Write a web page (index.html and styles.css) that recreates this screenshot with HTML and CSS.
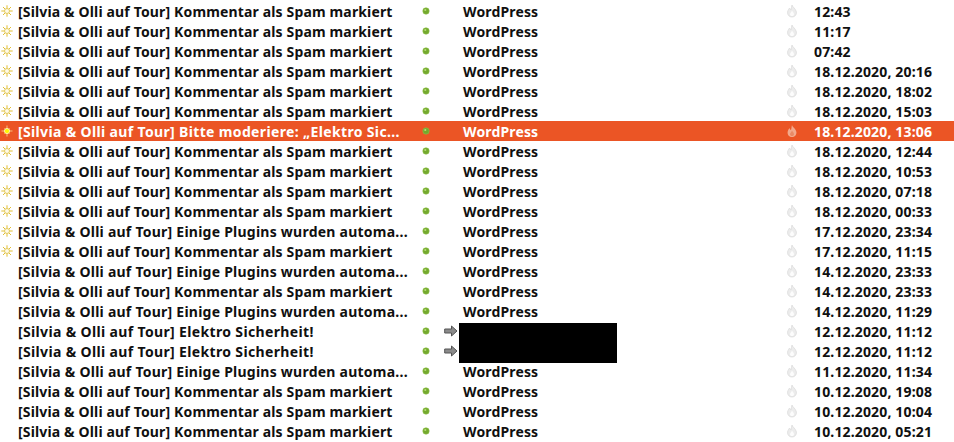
FILE: index.html
```html
<!DOCTYPE html>
<html lang="de">
<head>
<meta charset="utf-8">
<title>Mail</title>
<link rel="stylesheet" href="styles.css">
</head>
<body>
<svg class="defs" width="0" height="0" aria-hidden="true">
  <symbol id="star" viewBox="0 0 12 12">
    <path d="M6 0.3V3.4M6 8.6V11.7M0.3 6H3.4M8.6 6H11.7M2 2L4 4M10 2L8 4M2 10L4 8M10 10L8 8" stroke="#deb81e" stroke-width=".9" fill="none"/>
    <circle cx="6" cy="6" r="2.5" fill="#fffbe6" stroke="#dcbc3a" stroke-width=".8"/>
  </symbol>
  <symbol id="star-on" viewBox="0 0 12 12">
    <path d="M6 0.5V11.5M0.5 6H11.5" stroke="#f8c888" stroke-width=".9" fill="none"/>
    <path d="M3 3L9 9M9 3L3 9" stroke="#f4a068" stroke-width=".8" fill="none"/>
    <circle cx="6" cy="6" r="2.6" fill="#fff700" stroke="#fff8c4" stroke-width=".8"/>
  </symbol>
  <symbol id="dot" viewBox="0 0 8 8">
    <circle cx="4" cy="4" r="3.2" fill="#73a92c" stroke="#8dc04a" stroke-width=".6"/>
    <circle cx="3.3" cy="3" r="1.1" fill="#b5dc78"/>
  </symbol>
  <symbol id="flame" viewBox="0 0 12 14">
    <path d="M6 1C6.4 3 9.8 4.6 10.4 8C10.7 11 8.6 13 6 13C3.4 13 1.3 11 1.6 8C1.9 6 3 4.8 3.6 4C3.8 5 4.2 5.8 5 6C5.6 4.4 5.4 2.6 6 1Z" fill="#ececec" stroke="#dcdcdc" stroke-width=".8"/>
    <path d="M6 6.5C6.6 8 8 8.6 8 10.2C8 11.4 7 12 6 12C5 12 4 11.4 4 10.2C4 9 5.6 8 6 6.5Z" fill="#fcfcfc"/>
  </symbol>
  <symbol id="flame-on" viewBox="0 0 12 14">
    <path d="M6 1C6.4 3 9.8 4.6 10.4 8C10.7 11 8.6 13 6 13C3.4 13 1.3 11 1.6 8C1.9 6 3 4.8 3.6 4C3.8 5 4.2 5.8 5 6C5.6 4.4 5.4 2.6 6 1Z" fill="#f2a98c"/>
    <path d="M6 6.5C6.6 8 8 8.6 8 10.2C8 11.4 7 12 6 12C5 12 4 11.4 4 10.2C4 9 5.6 8 6 6.5Z" fill="#e88a66"/>
  </symbol>
  <symbol id="arrow" viewBox="0 0 14 12">
    <path d="M0.7 4H7.5V1L13 6L7.5 11V8H0.7Z" fill="#8a8a8a" stroke="#555" stroke-width="1"/>
  </symbol>
</svg>
<main class="list">
  <div class="row"><span class="c-star"><svg class="i-star"><use href="#star"/></svg></span><span class="subject">[Silvia &amp; Olli auf Tour] Kommentar als Spam markiert</span><span class="c-dot"><svg class="i-dot"><use href="#dot"/></svg></span><span class="c-arrow"></span><span class="sender">WordPress</span><span class="c-flame"><svg class="i-flame"><use href="#flame"/></svg></span><span class="date">12:43</span></div>
  <div class="row"><span class="c-star"><svg class="i-star"><use href="#star"/></svg></span><span class="subject">[Silvia &amp; Olli auf Tour] Kommentar als Spam markiert</span><span class="c-dot"><svg class="i-dot"><use href="#dot"/></svg></span><span class="c-arrow"></span><span class="sender">WordPress</span><span class="c-flame"><svg class="i-flame"><use href="#flame"/></svg></span><span class="date">11:17</span></div>
  <div class="row"><span class="c-star"><svg class="i-star"><use href="#star"/></svg></span><span class="subject">[Silvia &amp; Olli auf Tour] Kommentar als Spam markiert</span><span class="c-dot"><svg class="i-dot"><use href="#dot"/></svg></span><span class="c-arrow"></span><span class="sender">WordPress</span><span class="c-flame"><svg class="i-flame"><use href="#flame"/></svg></span><span class="date">07:42</span></div>
  <div class="row"><span class="c-star"><svg class="i-star"><use href="#star"/></svg></span><span class="subject">[Silvia &amp; Olli auf Tour] Kommentar als Spam markiert</span><span class="c-dot"><svg class="i-dot"><use href="#dot"/></svg></span><span class="c-arrow"></span><span class="sender">WordPress</span><span class="c-flame"><svg class="i-flame"><use href="#flame"/></svg></span><span class="date">18.12.2020, 20:16</span></div>
  <div class="row"><span class="c-star"><svg class="i-star"><use href="#star"/></svg></span><span class="subject">[Silvia &amp; Olli auf Tour] Kommentar als Spam markiert</span><span class="c-dot"><svg class="i-dot"><use href="#dot"/></svg></span><span class="c-arrow"></span><span class="sender">WordPress</span><span class="c-flame"><svg class="i-flame"><use href="#flame"/></svg></span><span class="date">18.12.2020, 18:02</span></div>
  <div class="row"><span class="c-star"><svg class="i-star"><use href="#star"/></svg></span><span class="subject">[Silvia &amp; Olli auf Tour] Kommentar als Spam markiert</span><span class="c-dot"><svg class="i-dot"><use href="#dot"/></svg></span><span class="c-arrow"></span><span class="sender">WordPress</span><span class="c-flame"><svg class="i-flame"><use href="#flame"/></svg></span><span class="date">18.12.2020, 15:03</span></div>
  <div class="row selected"><span class="c-star"><svg class="i-star"><use href="#star-on"/></svg></span><span class="subject wide">[Silvia &amp; Olli auf Tour] Bitte moderiere: „Elektro Sic...</span><span class="c-dot"><svg class="i-dot"><use href="#dot"/></svg></span><span class="c-arrow"></span><span class="sender">WordPress</span><span class="c-flame"><svg class="i-flame"><use href="#flame-on"/></svg></span><span class="date">18.12.2020, 13:06</span></div>
  <div class="row"><span class="c-star"><svg class="i-star"><use href="#star"/></svg></span><span class="subject">[Silvia &amp; Olli auf Tour] Kommentar als Spam markiert</span><span class="c-dot"><svg class="i-dot"><use href="#dot"/></svg></span><span class="c-arrow"></span><span class="sender">WordPress</span><span class="c-flame"><svg class="i-flame"><use href="#flame"/></svg></span><span class="date">18.12.2020, 12:44</span></div>
  <div class="row"><span class="c-star"><svg class="i-star"><use href="#star"/></svg></span><span class="subject">[Silvia &amp; Olli auf Tour] Kommentar als Spam markiert</span><span class="c-dot"><svg class="i-dot"><use href="#dot"/></svg></span><span class="c-arrow"></span><span class="sender">WordPress</span><span class="c-flame"><svg class="i-flame"><use href="#flame"/></svg></span><span class="date">18.12.2020, 10:53</span></div>
  <div class="row"><span class="c-star"><svg class="i-star"><use href="#star"/></svg></span><span class="subject">[Silvia &amp; Olli auf Tour] Kommentar als Spam markiert</span><span class="c-dot"><svg class="i-dot"><use href="#dot"/></svg></span><span class="c-arrow"></span><span class="sender">WordPress</span><span class="c-flame"><svg class="i-flame"><use href="#flame"/></svg></span><span class="date">18.12.2020, 07:18</span></div>
  <div class="row"><span class="c-star"><svg class="i-star"><use href="#star"/></svg></span><span class="subject">[Silvia &amp; Olli auf Tour] Kommentar als Spam markiert</span><span class="c-dot"><svg class="i-dot"><use href="#dot"/></svg></span><span class="c-arrow"></span><span class="sender">WordPress</span><span class="c-flame"><svg class="i-flame"><use href="#flame"/></svg></span><span class="date">18.12.2020, 00:33</span></div>
  <div class="row"><span class="c-star"><svg class="i-star"><use href="#star"/></svg></span><span class="subject snug">[Silvia &amp; Olli auf Tour] Einige Plugins wurden automa...</span><span class="c-dot"><svg class="i-dot"><use href="#dot"/></svg></span><span class="c-arrow"></span><span class="sender">WordPress</span><span class="c-flame"><svg class="i-flame"><use href="#flame"/></svg></span><span class="date">17.12.2020, 23:34</span></div>
  <div class="row"><span class="c-star"><svg class="i-star"><use href="#star"/></svg></span><span class="subject">[Silvia &amp; Olli auf Tour] Kommentar als Spam markiert</span><span class="c-dot"><svg class="i-dot"><use href="#dot"/></svg></span><span class="c-arrow"></span><span class="sender">WordPress</span><span class="c-flame"><svg class="i-flame"><use href="#flame"/></svg></span><span class="date">17.12.2020, 11:15</span></div>
  <div class="row"><span class="c-star"></span><span class="subject snug">[Silvia &amp; Olli auf Tour] Einige Plugins wurden automa...</span><span class="c-dot"><svg class="i-dot"><use href="#dot"/></svg></span><span class="c-arrow"></span><span class="sender">WordPress</span><span class="c-flame"><svg class="i-flame"><use href="#flame"/></svg></span><span class="date">14.12.2020, 23:33</span></div>
  <div class="row"><span class="c-star"></span><span class="subject">[Silvia &amp; Olli auf Tour] Kommentar als Spam markiert</span><span class="c-dot"><svg class="i-dot"><use href="#dot"/></svg></span><span class="c-arrow"></span><span class="sender">WordPress</span><span class="c-flame"><svg class="i-flame"><use href="#flame"/></svg></span><span class="date">14.12.2020, 23:33</span></div>
  <div class="row"><span class="c-star"></span><span class="subject snug">[Silvia &amp; Olli auf Tour] Einige Plugins wurden automa...</span><span class="c-dot"><svg class="i-dot"><use href="#dot"/></svg></span><span class="c-arrow"></span><span class="sender">WordPress</span><span class="c-flame"><svg class="i-flame"><use href="#flame"/></svg></span><span class="date">14.12.2020, 11:29</span></div>
  <div class="row"><span class="c-star"></span><span class="subject wide">[Silvia &amp; Olli auf Tour] Elektro Sicherheit!</span><span class="c-dot"><svg class="i-dot"><use href="#dot"/></svg></span><span class="c-arrow"><svg class="i-arrow"><use href="#arrow"/></svg></span><span class="sender"></span><span class="c-flame"><svg class="i-flame"><use href="#flame"/></svg></span><span class="date">12.12.2020, 11:12</span></div>
  <div class="row"><span class="c-star"></span><span class="subject wide">[Silvia &amp; Olli auf Tour] Elektro Sicherheit!</span><span class="c-dot"><svg class="i-dot"><use href="#dot"/></svg></span><span class="c-arrow"><svg class="i-arrow"><use href="#arrow"/></svg></span><span class="sender"></span><span class="c-flame"><svg class="i-flame"><use href="#flame"/></svg></span><span class="date">12.12.2020, 11:12</span></div>
  <div class="row"><span class="c-star"></span><span class="subject snug">[Silvia &amp; Olli auf Tour] Einige Plugins wurden automa...</span><span class="c-dot"><svg class="i-dot"><use href="#dot"/></svg></span><span class="c-arrow"></span><span class="sender">WordPress</span><span class="c-flame"><svg class="i-flame"><use href="#flame"/></svg></span><span class="date">11.12.2020, 11:34</span></div>
  <div class="row"><span class="c-star"></span><span class="subject">[Silvia &amp; Olli auf Tour] Kommentar als Spam markiert</span><span class="c-dot"><svg class="i-dot"><use href="#dot"/></svg></span><span class="c-arrow"></span><span class="sender">WordPress</span><span class="c-flame"><svg class="i-flame"><use href="#flame"/></svg></span><span class="date">10.12.2020, 19:08</span></div>
  <div class="row"><span class="c-star"></span><span class="subject">[Silvia &amp; Olli auf Tour] Kommentar als Spam markiert</span><span class="c-dot"><svg class="i-dot"><use href="#dot"/></svg></span><span class="c-arrow"></span><span class="sender">WordPress</span><span class="c-flame"><svg class="i-flame"><use href="#flame"/></svg></span><span class="date">10.12.2020, 10:04</span></div>
  <div class="row"><span class="c-star"></span><span class="subject">[Silvia &amp; Olli auf Tour] Kommentar als Spam markiert</span><span class="c-dot"><svg class="i-dot"><use href="#dot"/></svg></span><span class="c-arrow"></span><span class="sender">WordPress</span><span class="c-flame"><svg class="i-flame"><use href="#flame"/></svg></span><span class="date">10.12.2020, 05:21</span></div>
  <div class="redaction"></div>
</main>
</body>
</html>
```
FILE: styles.css
```css
html, body {
  margin: 0;
  padding: 0;
  height: 442px;
  overflow: hidden;
  background: #fff;
}
.defs {
  position: absolute;
}
.list {
  position: relative;
  padding-top: 1px;
  font-family: "Noto Sans", sans-serif;
  font-weight: 700;
  font-size: 14px;
  letter-spacing: 0.15px;
  color: #101010;
}
.row {
  display: grid;
  grid-template-columns: 18px 404px 22px 17px 324px 29px 1fr;
  align-items: center;
  height: 20px;
  line-height: 20px;
  white-space: nowrap;
}
.row span {
  display: flex;
  align-items: center;
  height: 20px;
  overflow: hidden;
}
.row .subject,
.row .sender,
.row .date {
  box-sizing: border-box;
  padding-top: 2px;
}
.subject.wide {
  letter-spacing: 0.35px;
}
.subject.snug {
  letter-spacing: 0.24px;
}
.selected {
  background: #eb5525;
  color: #fff;
}
.i-star {
  width: 12px;
  height: 12px;
  margin-left: 1px;
  margin-top: -1px;
}
.i-dot {
  width: 8px;
  height: 8px;
  margin-top: -1px;
}
.i-arrow {
  width: 14px;
  height: 12px;
}
.i-flame {
  width: 12px;
  height: 14px;
  margin-left: 1px;
}
.row .sender {
  padding-left: 2px;
}
.redaction {
  position: absolute;
  left: 459px;
  top: 323px;
  width: 158px;
  height: 40px;
  background: #000;
}
```
